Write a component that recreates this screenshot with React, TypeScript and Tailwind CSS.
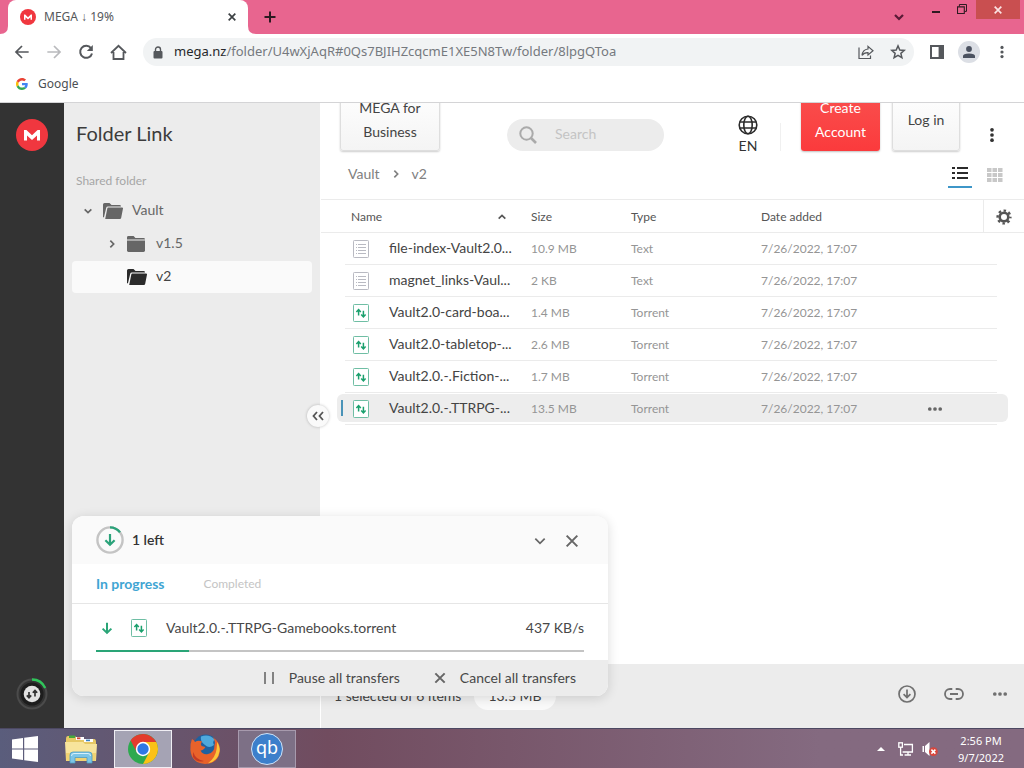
import React from "react";

type IconProps = { className?: string };

const UI = "font-['Lato','Noto_Sans',sans-serif]";
const CHROME = "font-['Noto_Sans','Open_Sans',sans-serif]";

function Stroke({
  d,
  className,
  width = 2,
  box = 24,
}: {
  d: string;
  className?: string;
  width?: number;
  box?: number;
}) {
  return (
    <svg viewBox={`0 0 ${box} ${box}`} className={className} fill="none" stroke="currentColor" strokeWidth={width} aria-hidden="true">
      <path d={d} />
    </svg>
  );
}

const CLOSE = "M4 4 L20 20 M20 4 L4 20";
const DOWN = "M4 8 L12 16 L20 8";
const UP = "M4 16 L12 8 L20 16";
const RIGHT = "M8 4 L16 12 L8 20";

function MegaMark({ className }: IconProps) {
  return (
    <svg viewBox="0 0 32 32" className={className} aria-hidden="true">
      <circle cx="16" cy="16" r="16" fill="#f0373f" />
      <path d="M8 21.5 V11 h2.4 L16 16.3 L21.6 11 H24 V21.5 H21 V16.4 L16 21 L11 16.4 V21.5 Z" fill="#fff" />
    </svg>
  );
}

function GoogleMark({ className }: IconProps) {
  return (
    <svg viewBox="0 0 48 48" className={className} aria-hidden="true">
      <path fill="#EA4335" d="M24 9.5c3.54 0 6.71 1.22 9.21 3.6l6.85-6.85C35.9 2.38 30.47 0 24 0 14.62 0 6.51 5.38 2.56 13.22l7.98 6.19C12.43 13.72 17.74 9.5 24 9.5z" />
      <path fill="#4285F4" d="M46.98 24.55c0-1.57-.15-3.09-.38-4.55H24v9.02h12.94c-.58 2.96-2.26 5.48-4.78 7.18l7.73 6c4.51-4.18 7.09-10.36 7.09-17.65z" />
      <path fill="#FBBC05" d="M10.53 28.59c-.48-1.45-.76-2.99-.76-4.59s.27-3.14.76-4.59l-7.98-6.19C.92 16.46 0 20.12 0 24c0 3.88.92 7.54 2.56 10.78l7.97-6.19z" />
      <path fill="#34A853" d="M24 48c6.48 0 11.93-2.13 15.89-5.81l-7.73-6c-2.15 1.45-4.92 2.3-8.16 2.3-6.26 0-11.57-4.22-13.47-9.91l-7.98 6.19C6.51 42.62 14.62 48 24 48z" />
    </svg>
  );
}

function Dots({ vertical = false, className }: IconProps & { vertical?: boolean }) {
  return (
    <svg viewBox="0 0 20 20" className={className} fill="currentColor" aria-hidden="true">
      {[3.5, 10, 16.5].map((p) => (
        <circle key={p} cx={vertical ? 10 : p} cy={vertical ? p : 10} r="2.3" />
      ))}
    </svg>
  );
}

function OpenFolder({ className }: IconProps) {
  return (
    <svg viewBox="0 0 20 16" className={className} fill="currentColor" aria-hidden="true">
      <path d="M0 14 V1.5 Q0 0 1.5 0 H6.5 L8.5 2 H16.5 Q18 2 18 3.4 H4.8 Q3.6 3.4 3.3 4.4 L0.9 14.6 Z" />
      <path d="M5.2 4.6 H19.2 Q20.2 4.6 20 5.6 L18.2 14.8 Q18 16 16.8 16 H2.2 L4.3 5.4 Q4.4 4.6 5.2 4.6 Z" />
    </svg>
  );
}

function ClosedFolder({ className }: IconProps) {
  return (
    <svg viewBox="0 0 18 16" className={className} fill="currentColor" aria-hidden="true">
      <path d="M0 3.4 V1.4 Q0 0 1.4 0 H6.6 L8.4 2 H16.6 Q18 2 18 3.4 Z" />
      <path d="M0 4.6 H18 V14.6 Q18 16 16.6 16 H1.4 Q0 16 0 14.6 Z" />
    </svg>
  );
}

function TorrentIcon({ className }: IconProps) {
  return (
    <svg viewBox="0 0 16 18" className={className} fill="none" aria-hidden="true">
      <rect x="0.5" y="0.5" width="15" height="17" rx="0.8" fill="#fff" stroke="#6fbea4" />
      <path d="M5.6 11.5 V6 M3.4 8 L5.6 5.6 L7.8 8 M10.4 6.8 V12.4 M8.2 10.6 L10.4 13 L12.6 10.6" stroke="#1aa06d" strokeWidth="1.5" />
    </svg>
  );
}

function TextIcon({ className }: IconProps) {
  return (
    <svg viewBox="0 0 16 18" className={className} fill="none" aria-hidden="true">
      <rect x="0.5" y="0.5" width="15" height="17" rx="0.8" fill="#fff" stroke="#b9bac2" />
      <path d="M3 4.5 h1 M5 4.5 h8 M3 7.5 h1 M5 7.5 h8 M3 10.5 h1 M5 10.5 h8 M3 13.5 h1 M5 13.5 h8" stroke="#b9bac2" />
    </svg>
  );
}

function BrowserChrome() {
  return (
    <header className={`${CHROME} shrink-0 border-b border-[#d4d4d6] bg-white`}>
      <div className="flex h-[34px] bg-[#e8658f] pl-2">
        <div className="relative flex w-60 items-center rounded-t-lg bg-white pr-[11px] pl-3">
          <svg viewBox="0 0 8 8" className="absolute bottom-0 -left-2 size-2" aria-hidden="true">
            <path d="M8 0 V8 H0 Q8 8 8 0" fill="#fff" />
          </svg>
          <svg viewBox="0 0 8 8" className="absolute -right-2 bottom-0 size-2" aria-hidden="true">
            <path d="M0 0 V8 H8 Q0 8 0 0" fill="#fff" />
          </svg>
          <MegaMark className="size-4" />
          <span className="ml-2 flex-1 text-xs text-[#55575a]">MEGA ↓ 19%</span>
          <button aria-label="Close tab" className="text-[#3c4043]">
            <Stroke d={CLOSE} className="size-[10px]" width={4} />
          </button>
        </div>
        <button aria-label="New tab" className="ml-4 text-[#2d1a21]">
          <Stroke d="M12 1 V23 M1 12 H23" className="size-3" width={4} />
        </button>
        <div className="ml-auto flex items-start text-[#5a1a36]">
          <button aria-label="Search tabs" className="mt-[11px] mr-[27px]">
            <Stroke d={DOWN} className="size-3" width={4.5} />
          </button>
          <button aria-label="Minimize" className="mt-[11px] mr-[17px] h-[2px] w-2 bg-[#2d1a21]" />
          <button aria-label="Restore" className="mt-1 mr-[9px]">
            <svg viewBox="0 0 10 10" className="size-[10px]" fill="none" stroke="#2d1a21" aria-hidden="true">
              <path d="M0.5 2.8 H7.3 V9.5 H0.5 Z M0 3 H7.5" strokeWidth="1.1" />
              <path d="M2.4 2.5 V0.5 H9.5 V7.4 H7.5" />
            </svg>
          </button>
          <button aria-label="Close window" className="mr-1 flex h-[19px] w-11 items-center justify-center bg-[#c94f50] text-[#fbe3e3]">
            <Stroke d={CLOSE} className="size-[10px]" width={4} />
          </button>
        </div>
      </div>

      <div className="flex h-9 items-center pr-[15px] pl-[14px] text-[#55585c]">
        <button aria-label="Back"><Stroke d="M22 12 H4 M12 3 L3 12 L12 21" className="size-4" width={2.6} /></button>
        <button aria-label="Forward" className="ml-4 text-[#b9babd]"><Stroke d="M2 12 H20 M12 3 L21 12 L12 21" className="size-4" width={2.6} /></button>
        <button aria-label="Reload" className="ml-4">
          <svg viewBox="0 0 16 16" className="size-4" fill="none" aria-hidden="true">
            <path d="M13 4.2 A6 6 0 1 0 14 9.4" stroke="currentColor" strokeWidth="2" />
            <path d="M14.8 1 V7 H8.8 Z" fill="currentColor" />
          </svg>
        </button>
        <button aria-label="Home" className="ml-4">
          <Stroke d="M1 9 L8.5 1.8 L16 9 M3.5 8 V15 H13.5 V8" className="size-[17px]" width={1.8} box={17} />
        </button>
        <div className="ml-4 flex h-7 flex-1 items-center rounded-full bg-[#f1f3f4] pr-2 pl-[10px]">
          <svg viewBox="0 0 10 13" className="h-[13px] w-[10px]" aria-hidden="true">
            <rect x="0.5" y="5" width="9" height="7.5" rx="1" fill="#55585c" />
            <path d="M2.5 5.5 V3.5 a2.5 2.5 0 0 1 5 0 V5.5" fill="none" stroke="#55585c" strokeWidth="1.4" />
          </svg>
          <p className="ml-[11px] flex-1 text-[13px] whitespace-nowrap text-[#75797e]">
            <span className="text-[#26282b]">mega.nz</span>/folder/U4wXjAqR#0Qs7BJIHZcqcmE1XE5N8Tw/folder/8lpgQToa
          </p>
          <button aria-label="Share" className="mr-4">
            <svg viewBox="0 0 16 16" className="size-4" fill="none" stroke="currentColor" strokeWidth="1.2" aria-hidden="true">
              <path d="M1 3.5 V14.5 H12.5 V11.5" />
              <path d="M10 2.4 L15 6.8 L10 11 V8.6 Q6 8.4 4 11.4 Q4.6 5.6 10 5 Z" />
            </svg>
          </button>
          <button aria-label="Bookmark">
            <Stroke d="M12 2.8 L14.7 9 L21.4 9.6 L16.3 14 L17.9 20.6 L12 17.1 L6.1 20.6 L7.7 14 L2.6 9.6 L9.3 9 Z" className="size-4" width={2.2} />
          </button>
        </div>
        <button aria-label="Side panel" className="ml-4">
          <svg viewBox="0 0 14 14" className="size-[14px]" aria-hidden="true">
            <path d="M0 0 H14 V14 H0 Z M2 2 V12 H8.6 V2 Z" fillRule="evenodd" fill="currentColor" />
          </svg>
        </button>
        <button aria-label="Profile" className="ml-[14px] flex size-[22px] items-center justify-center rounded-full bg-[#dcdfe5]">
          <svg viewBox="0 0 12 12" className="size-3" fill="#4b5260" aria-hidden="true">
            <circle cx="6" cy="3" r="2.9" />
            <path d="M0 12 V10 Q0 7.4 6 7.4 Q12 7.4 12 10 V12 Z" />
          </svg>
        </button>
        <button aria-label="Browser menu" className="ml-[15px]"><Dots vertical className="size-[14px]" /></button>
      </div>

      <nav className="flex h-8 items-center pb-1 pl-4">
        <a href="#google" className="flex items-center gap-[10px] text-xs text-[#4c5053]">
          <GoogleMark className="size-3" />
          Google
        </a>
      </nav>
    </header>
  );
}

function Rail() {
  return (
    <div className="flex w-16 shrink-0 flex-col items-center justify-between bg-[#333] pt-4 pb-[18px]">
      <a href="#home" aria-label="MEGA"><MegaMark className="size-8" /></a>
      <button aria-label="Transfers">
        <svg viewBox="0 0 32 32" className="size-8" fill="none" aria-hidden="true">
          <circle cx="16" cy="16" r="14.5" stroke="#4b4b4b" strokeWidth="2" />
          <circle cx="16" cy="16" r="11.5" fill="#1d1d1d" />
          <path d="M16 1.5 A14.5 14.5 0 0 1 29.2 10" stroke="#2fc65a" strokeWidth="2.4" />
          <circle cx="16" cy="16" r="8.3" fill="#e2e2e2" />
          <path d="M13 14 V19.5 M10.8 17.4 L13 19.8 L15.2 17.4 M19 18.5 V12.6 M16.8 14.8 L19 12.4 L21.2 14.8" stroke="#333" strokeWidth="1.7" />
        </svg>
      </button>
    </div>
  );
}

function Sidebar() {
  return (
    <aside className="relative w-64 shrink-0 bg-[#ececec] px-2 pt-[15px] text-[#666]">
      <h1 className="pl-1 text-xl leading-[30px] text-[#3c3c3c]">Folder Link</h1>
      <p className="mt-6 pl-1 text-xs leading-[18px] text-[#a6a6a6]">Shared folder</p>
      <ul className="mt-[5px] flex flex-col gap-px text-sm">
        <li>
          <button className="flex h-8 w-full items-center pl-[11px]">
            <Stroke d={DOWN} className="size-[10px]" width={4} />
            <OpenFolder className="ml-[10px] h-4 w-5" />
            <span className="ml-[9px] pb-[2px]">Vault</span>
          </button>
        </li>
        <li>
          <button className="flex h-8 w-full items-center pl-[35px]">
            <Stroke d={RIGHT} className="size-[10px]" width={4} />
            <ClosedFolder className="ml-[10px] h-4 w-[18px]" />
            <span className="ml-[11px] pb-[2px]">v1.5</span>
          </button>
        </li>
        <li>
          <button className="flex h-8 w-full items-center rounded-sm bg-[#fafafa] pl-[55px] text-[#444]">
            <OpenFolder className="h-4 w-5 text-[#2b2b2b]" />
            <span className="ml-[9px] pb-[2px]">v2</span>
          </button>
        </li>
      </ul>
      <button
        aria-label="Collapse sidebar"
        className="absolute top-[302px] -right-[9px] z-10 flex size-[22px] items-center justify-center rounded-full bg-[#fafafa] text-[#555] shadow-[0_0_3px_rgba(0,0,0,0.25)]"
      >
        <Stroke d="M5 2 L1.5 6 L5 10 M11 2 L7.5 6 L11 10" className="size-3" width={1.8} box={12} />
      </button>
    </aside>
  );
}

const lightButton =
  "rounded-[3px] border border-[#dedede] bg-linear-to-b from-white to-[#f4f4f4] text-sm leading-6 text-[#444] shadow-[0_1px_2px_rgba(0,0,0,0.2)]";

function TopBar() {
  return (
    <div className="flex h-14 shrink-0 items-end overflow-hidden pr-[18px] pb-2 pl-[19px]">
      <button className={`${lightButton} w-[100px] shrink-0 px-2 pt-2 pb-[6px]`}>MEGA for Business</button>
      <label className="ml-[67px] flex h-8 w-[157px] items-center rounded-full bg-[#ececec] pl-3">
        <svg viewBox="0 0 18 18" className="size-[18px] shrink-0" fill="none" stroke="#aaa" strokeWidth="2" aria-hidden="true">
          <circle cx="7.5" cy="7.5" r="6.2" />
          <path d="M12 12 L17 17" strokeWidth="2.6" />
        </svg>
        <input
          type="search"
          aria-label="Search"
          placeholder="Search"
          className="ml-[18px] w-full min-w-0 bg-transparent pb-[2px] text-sm outline-none placeholder:text-[#c4c4c4]"
        />
      </label>
      <button className="-mb-1 ml-auto flex flex-col items-center text-sm leading-[18px] text-[#333]">
        <svg viewBox="0 0 20 20" className="mb-[2px] size-5" fill="none" stroke="#2b2b2b" strokeWidth="1.6" aria-hidden="true">
          <circle cx="10" cy="10" r="8.8" />
          <ellipse cx="10" cy="10" rx="4.2" ry="8.8" />
          <path d="M1.8 7 H18.2 M1.8 13 H18.2" />
        </svg>
        EN
      </button>
      <div className="ml-[22px] h-7 w-px bg-[#f0f0f0]" />
      <button className="ml-5 w-[79px] shrink-0 rounded-[3px] bg-linear-to-b from-[#f9504f] to-[#fb3a3c] px-2 pt-2 pb-[7px] text-sm leading-6 text-white shadow-[0_1px_2px_rgba(0,0,0,0.25)]">
        Create Account
      </button>
      <button className={`${lightButton} ml-3 w-17 shrink-0 pt-5 pb-[18px]`}>Log in</button>
      <button aria-label="More options" className="ml-[18px] flex w-7 justify-center pb-2 text-[#333]">
        <Dots vertical className="size-4" />
      </button>
    </div>
  );
}

const files = [
  { name: "file-index-Vault2.0...", size: "10.9 MB", type: "Text" },
  { name: "magnet_links-Vaul...", size: "2 KB", type: "Text" },
  { name: "Vault2.0-card-boa...", size: "1.4 MB", type: "Torrent" },
  { name: "Vault2.0-tabletop-...", size: "2.6 MB", type: "Torrent" },
  { name: "Vault2.0.-.Fiction-...", size: "1.7 MB", type: "Torrent" },
  { name: "Vault2.0.-.TTRPG-...", size: "13.5 MB", type: "Torrent", selected: true },
];

function FileTable() {
  const line = "border-b border-[#ebebeb]";
  return (
    <table className="w-full table-fixed border-separate border-spacing-0 text-left">
      <colgroup>
        <col className="w-6" />
        <col className="w-[186px]" />
        <col className="w-[100px]" />
        <col className="w-[130px]" />
        <col />
        <col className="w-[56px]" />
        <col className="w-[14px]" />
        <col className="w-[27px]" />
      </colgroup>
      <thead>
        <tr className="text-xs text-[#555] [&>th]:h-[34px] [&>th]:border-y [&>th]:border-[#ebebeb] [&>th]:pt-[2px] [&>th]:font-normal">
          <th colSpan={2} className="pr-6 pl-[30px]">
            <button className="flex w-full items-center justify-between">
              Name
              <Stroke d={UP} className="size-[10px]" width={4} />
            </button>
          </th>
          <th>Size</th>
          <th>Type</th>
          <th colSpan={2}>Date added</th>
          <th colSpan={2} className="border-l">
            <button aria-label="Column settings" className="mx-auto block">
              <svg viewBox="0 0 16 16" className="size-4" fill="none" stroke="#555" aria-hidden="true">
                <circle cx="8" cy="8" r="4.3" strokeWidth="2.6" />
                <circle cx="8" cy="8" r="6.4" strokeWidth="2.4" strokeDasharray="2.5 2.527" strokeDashoffset="1.2" />
              </svg>
            </button>
          </th>
        </tr>
      </thead>
      <tbody>
        {files.map((f) => (
          <tr key={f.name} className="relative text-xs text-[#959595] [&>td]:h-8">
            <td>
              {f.selected && (
                <span className="absolute top-[1px] right-4 bottom-[3px] left-4 -z-10 rounded-md bg-[#ededed]">
                  <span className="absolute inset-y-[6px] left-1 w-[2px] bg-[#4a93b8]" />
                </span>
              )}
            </td>
            <td className={line}>
              <div className="flex items-center">
                {f.type === "Text" ? (
                  <TextIcon className="ml-2 h-[18px] w-4 shrink-0" />
                ) : (
                  <TorrentIcon className="ml-2 h-[18px] w-4 shrink-0" />
                )}
                <span className="ml-5 pb-[2px] text-sm whitespace-nowrap text-[#444]">{f.name}</span>
              </div>
            </td>
            <td className={line}>{f.size}</td>
            <td className={line}>{f.type}</td>
            <td className={line}>7/26/2022, 17:07</td>
            <td className={line}>
              {f.selected && (
                <button aria-label="File actions" className="block text-[#666]">
                  <Dots className="size-4" />
                </button>
              )}
            </td>
            <td className={line} />
            <td />
          </tr>
        ))}
      </tbody>
    </table>
  );
}

function Main() {
  return (
    <main className="isolate flex min-w-0 flex-1 flex-col border-l border-white bg-white">
      <TopBar />
      <div className="flex h-10 shrink-0 items-start pr-[21px] pl-[27px] text-sm text-[#808080]">
        <nav className="flex items-center pt-[5px]">
          <a href="#vault">Vault</a>
          <Stroke d={RIGHT} className="mx-[11px] size-[10px]" width={4} />
          <a href="#v2">v2</a>
        </nav>
        <button aria-label="List view" className="ml-auto flex h-[29px] w-6 items-center justify-center border-b-2 border-[#3d96c8] pt-px">
          <svg viewBox="0 0 16 14" className="h-[14px] w-4" stroke="#2b2b2b" strokeWidth="2" aria-hidden="true">
            <path d="M0 2 H3 M5 2 H16 M0 7 H3 M5 7 H16 M0 12 H3 M5 12 H16" />
          </svg>
        </button>
        <button aria-label="Grid view" className="ml-[15px] flex h-[31px] items-center justify-center">
          <svg viewBox="0 0 16 14" className="h-[14px] w-4" fill="#c8c8c8" aria-hidden="true">
            {[0, 5, 10].map((y) => [0, 5.5, 11].map((x) => <rect key={`${x}-${y}`} x={x} y={y} width="4.5" height="4" />))}
          </svg>
        </button>
      </div>
      <FileTable />
      <footer className="mt-auto flex h-16 items-center bg-[#ececec] pr-4 pl-[13px] text-sm text-[#444]">
        <span>1 selected of 6 items</span>
        <span className="ml-[13px] rounded-full bg-[#fafafa] px-[14px] py-1">13.5 MB</span>
        <div className="ml-auto flex items-center gap-7 pb-1 text-[#707070]">
          <button aria-label="Download">
            <svg viewBox="0 0 18 18" className="size-[18px]" fill="none" stroke="currentColor" strokeWidth="1.7" aria-hidden="true">
              <circle cx="9" cy="9" r="8" />
              <path d="M9 4.6 V12.4 M5.6 9.2 L9 12.6 L12.4 9.2" />
            </svg>
          </button>
          <button aria-label="Get link">
            <svg viewBox="0 0 20 12" className="h-3 w-5" fill="none" stroke="currentColor" strokeWidth="1.8" aria-hidden="true">
              <path d="M8.3 1 H6 a5 5 0 0 0 0 10 H8.3 M11.7 1 H14 a5 5 0 0 1 0 10 H11.7 M6 6 H14" />
            </svg>
          </button>
          <button aria-label="More actions"><Dots className="size-4" /></button>
        </div>
      </footer>
    </main>
  );
}

const progress = 19;

function TransferPanel() {
  return (
    <section className="absolute bottom-8 left-[72px] z-20 w-[536px] max-w-full overflow-hidden rounded-xl bg-white text-sm text-[#484848] shadow-[0_2px_12px_rgba(0,0,0,0.14)]">
      <div className="flex h-12 items-center bg-[#fafafa] pr-7 pl-6">
        <svg viewBox="0 0 28 28" className="size-7" fill="none" aria-hidden="true">
          <circle cx="14" cy="14" r="12.6" stroke="#c4c4c4" strokeWidth="2.4" />
          <path d="M14 1.4 A12.6 12.6 0 0 1 24 6.4" stroke="#2ba37a" strokeWidth="2.4" />
          <path d="M14 8 V18.6 M9.4 14.2 L14 18.8 L18.6 14.2" stroke="#2ba37a" strokeWidth="2.2" />
        </svg>
        <h2 className="ml-2 flex-1 font-semibold text-[#333]">1 left</h2>
        <button aria-label="Minimize transfers" className="pt-[2px] text-[#666]"><Stroke d={DOWN} className="size-[14px]" width={3} /></button>
        <button aria-label="Close transfers" className="ml-[17px] pt-[2px] text-[#666]"><Stroke d={CLOSE} className="size-4" width={3} /></button>
      </div>
      <div className="flex h-10 items-center gap-[39px] border-b border-[#e6e6e6] px-6">
        <button className="font-bold text-[#3fa5d3]">In progress</button>
        <button className="pt-px text-xs text-[#c4c4c4]">Completed</button>
      </div>
      <div className="px-6 pb-2">
        <div className="flex h-[46px] items-center pt-[2px]">
          <Stroke d="M12 3 V20 M4.5 13 L12 20.5 L19.5 13" className="ml-1 size-[14px] text-[#2aa577]" width={3.4} />
          <TorrentIcon className="ml-[17px] h-[18px] w-4" />
          <span className="ml-[19px] flex-1">Vault2.0.-.TTRPG-Gamebooks.torrent</span>
          <span className="pb-px">437 KB/s</span>
        </div>
        <div role="progressbar" aria-label="Download progress" aria-valuenow={progress} className="h-[2px] bg-[#c4c4c4]">
          <div className="h-full bg-[#2aa577]" style={{ width: `${progress}%` }} />
        </div>
      </div>
      <div className="flex h-9 items-center justify-end bg-[#ececec] pr-8 pb-px">
        <button className="flex items-center">
          <svg viewBox="0 0 12 12" className="mr-[14px] size-3" stroke="#777" strokeWidth="1.8" aria-hidden="true">
            <path d="M2 0 V12 M10 0 V12" />
          </svg>
          Pause all transfers
        </button>
        <button className="ml-[33px] flex items-center">
          <Stroke d={CLOSE} className="mr-[13px] size-[14px] text-[#666]" width={3.4} />
          Cancel all transfers
        </button>
      </div>
    </section>
  );
}

function Taskbar() {
  return (
    <footer
      className={`${CHROME} flex h-10 shrink-0 items-center border-t border-[#4c4862] bg-linear-to-r from-[#5a5d7c] from-0% via-[#714c5f] via-32% to-[#846a80] to-80% pr-5 text-[11px] text-white`}
    >
      <button aria-label="Start" className="ml-3">
        <svg viewBox="0 0 26 26" className="size-[26px]" fill="#fff" aria-hidden="true">
          <path d="M0 3.6 L11 2 V12.4 H0 Z M12.2 1.8 L26 0 V12.4 H12.2 Z M0 13.6 H11 V24 L0 22.4 Z M12.2 13.6 H26 V26 L12.2 24.2 Z" />
        </svg>
      </button>
      <button aria-label="File Explorer" className="ml-[26px]">
        <svg viewBox="0 0 34 30" className="h-[30px] w-[34px]" aria-hidden="true">
          <path d="M2 5 Q2 2 4 2 H11 L13 5 H30 Q32 5 32 8 V24 H2 Z" fill="#e6c865" />
          <rect x="5" y="1.5" width="6" height="2.5" fill="#46a83c" />
          <rect x="12" y="3" width="8" height="3" fill="#fff" />
          <rect x="13" y="3.4" width="3.4" height="1.8" fill="#cf4436" />
          <rect x="20" y="5" width="9" height="3" fill="#fff" />
          <rect x="22" y="5.6" width="4" height="1.6" fill="#3b83c4" />
          <path d="M1 8 H19 L21 10 H33 L32 27 H2 Z" fill="#f7e49c" />
          <path d="M2 19 H32 L31.6 27 H2.2 Z" fill="#f0d272" />
          <path d="M6 29 V21 Q6 18 9 18 H25 Q28 18 28 21 V29 H23 V23.5 H11 V29 Z" fill="#7cc5e6" stroke="#4d9cc4" strokeWidth="0.8" />
          <path d="M7.5 22 Q7.5 19.5 10 19.5 H24 Q26.5 19.5 26.5 22" fill="none" stroke="#d6f0fb" />
        </svg>
      </button>
      <button aria-label="Chrome" className="ml-4 flex h-[38px] w-[58px] items-center justify-center border border-[#f0eef4] bg-[#a5a3b4]">
        <svg viewBox="0 0 30 30" className="size-[30px]" aria-hidden="true">
          <circle cx="15" cy="15" r="15" fill="#2da94f" />
          <path d="M15 8 H28.27 A15 15 0 0 1 15 30 L21.06 18.5 Z" fill="#fbc116" />
          <path d="M15 15 L8.94 18.5 L2.6 6.6 A15 15 0 0 1 28.27 8 H15 Z" fill="#e33b2e" />
          <circle cx="15" cy="15" r="7.2" fill="#fff" />
          <circle cx="15" cy="15" r="5.7" fill="#2f78e4" />
        </svg>
      </button>
      <button aria-label="Firefox" className="ml-[18px]">
        <svg viewBox="0 0 30 30" className="size-[30px]" aria-hidden="true">
          <circle cx="15.6" cy="13" r="12.4" fill="#1f619f" />
          <path d="M11 2.6 Q19 -0.6 25 6 Q22 7 24 11 Q19 15 15 11 Q10 8 11 2.6 Z" fill="#4fa9dc" />
          <path d="M2 5 Q4 6 5 8 Q8 6 12 7.4 Q10 9.6 11.6 12 L15.4 13 Q13.6 16.4 10.6 16.4 Q12.6 21 18 20 Q24.6 18.4 24.4 12 Q24.6 10 25 9 Q24.4 5 22.6 3 Q30 8 30 16 Q29 29.6 15 30 Q1.6 29.2 0.4 16 Q0 9.6 2 5 Z" fill="#e8622a" />
          <path d="M27 8 Q30 12 29.6 17 Q28 27.6 18 29.2 Q25.4 24 26.6 15 Q27.2 10.6 27 8 Z" fill="#fbc63a" />
          <path d="M3 18 Q6 26 14 27 Q7 29 3 23 Z" fill="#c43a24" />
        </svg>
      </button>
      <button aria-label="qBittorrent" className="ml-[18px] flex h-[38px] w-[58px] items-center justify-center border border-[#a79aad] bg-[#7d7086]">
        <span className="flex size-8 items-center justify-center rounded-full border border-[#cfe3f7] bg-[#3c7fcb] pb-1 text-lg leading-none">qb</span>
      </button>
      <div className="ml-auto flex items-center">
        <button aria-label="Show hidden icons">
          <svg viewBox="0 0 8 4" className="h-1 w-2" fill="#fff" aria-hidden="true"><path d="M4 0 L8 4 H0 Z" /></svg>
        </button>
        <svg viewBox="0 0 16 14" className="ml-[13px] h-[14px] w-4" fill="none" stroke="#fff" strokeWidth="1.3" role="img" aria-label="Network">
          <path d="M6 2.5 H14.4 V10 H4.6 M10 10 V13 M6.6 13 H13 M2.6 5 V13 H5" />
          <rect x="0.8" y="0.8" width="3.6" height="4.4" />
        </svg>
        <svg viewBox="0 0 16 16" className="ml-2 size-4" role="img" aria-label="Muted">
          <path d="M0.5 5 H2 V11 H0.5 Z M3 5 L7.5 1 V15 L3 11 Z" fill="#fff" />
          <circle cx="11.4" cy="10.6" r="4.4" fill="#d8463c" />
          <path d="M9.4 8.6 L13.4 12.6 M13.4 8.6 L9.4 12.6" stroke="#fff" strokeWidth="1.5" />
        </svg>
        <p className="ml-5 text-center leading-[17px]">
          2:56 PM
          <br />
          9/7/2022
        </p>
      </div>
    </footer>
  );
}

export default function App() {
  return (
    <div className={`${UI} flex h-screen flex-col overflow-hidden bg-white`}>
      <BrowserChrome />
      <div className="relative flex min-h-0 flex-1">
        <Rail />
        <Sidebar />
        <Main />
        <TransferPanel />
      </div>
      <Taskbar />
    </div>
  );
}
